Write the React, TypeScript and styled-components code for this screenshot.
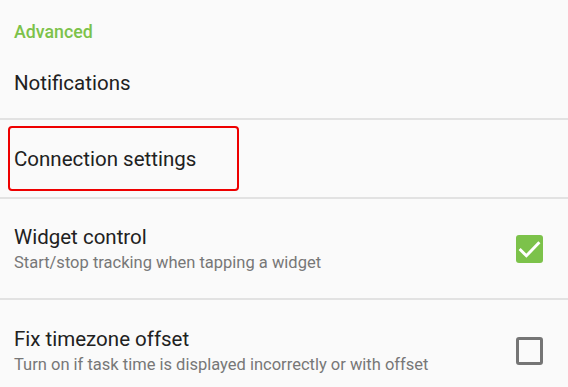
import React from 'react';
import styled, { createGlobalStyle } from 'styled-components';

const GlobalStyle = createGlobalStyle`
  html, body {
    margin: 0;
    padding: 0;
    background: #fafafa;
    font-family: Roboto, "Liberation Sans", sans-serif;
  }
`;

const Styled = {
  Page: styled.div`
    width: 568px;
    height: 387px;
    overflow: hidden;
    background: #fafafa;
  `,
  Header: styled.div`
    height: 48px;
    display: flex;
    align-items: center;
    padding: 14px 14px 0;
    box-sizing: border-box;
    color: #7cc24a;
    font-size: 17.8px;
    font-weight: 500;
  `,
  Row: styled.div<{ height: number; pad?: number }>`
    height: ${(p) => p.height}px;
    display: flex;
    align-items: center;
    justify-content: space-between;
    padding: 0 25px 0 ${(p) => p.pad ?? 14}px;
    box-sizing: border-box;
    border-bottom: 2px solid #e2e2e2;
  `,
  TextBlock: styled.div`
    display: flex;
    flex-direction: column;
    gap: 3px;
  `,
  Title: styled.div`
    font-size: 20.5px;
    color: #212121;
    line-height: 24px;
  `,
  Summary: styled.div`
    font-size: 16.5px;
    color: #777777;
    line-height: 21px;
  `,
  Highlight: styled.div`
    width: 231px;
    height: 65px;
    box-sizing: border-box;
    border: 2px solid #ee0000;
    border-radius: 4px;
    display: flex;
    align-items: center;
    padding-left: 4px;
  `,
  Check: styled.div<{ checked: boolean }>`
    width: 27px;
    height: 28px;
    box-sizing: border-box;
    border-radius: 3px;
    flex-shrink: 0;
    display: flex;
    align-items: center;
    justify-content: center;
    background: ${(p) => (p.checked ? '#7cc24a' : 'transparent')};
    border: ${(p) => (p.checked ? 'none' : '3px solid #757575')};
  `,
};

const CheckMark = () => (
  <svg width="25" height="25" viewBox="0 0 24 24">
    <path d="M2.5 12.5l6.5 6.5L21.5 6" fill="none" stroke="#fff" strokeWidth="2.8" />
  </svg>
);

export default function App() {
  return (
    <Styled.Page>
      <GlobalStyle />
      <Styled.Header>Advanced</Styled.Header>
      <Styled.Row height={72}>
        <Styled.Title>Notifications</Styled.Title>
      </Styled.Row>
      <Styled.Row height={79} pad={8}>
        <Styled.Highlight>
          <Styled.Title>Connection settings</Styled.Title>
        </Styled.Highlight>
      </Styled.Row>
      <Styled.Row height={101}>
        <Styled.TextBlock>
          <Styled.Title>Widget control</Styled.Title>
          <Styled.Summary>Start/stop tracking when tapping a widget</Styled.Summary>
        </Styled.TextBlock>
        <Styled.Check checked>
          <CheckMark />
        </Styled.Check>
      </Styled.Row>
      <Styled.Row height={104}>
        <Styled.TextBlock>
          <Styled.Title>Fix timezone offset</Styled.Title>
          <Styled.Summary>Turn on if task time is displayed incorrectly or with offset</Styled.Summary>
        </Styled.TextBlock>
        <Styled.Check checked={false} />
      </Styled.Row>
    </Styled.Page>
  );
}
